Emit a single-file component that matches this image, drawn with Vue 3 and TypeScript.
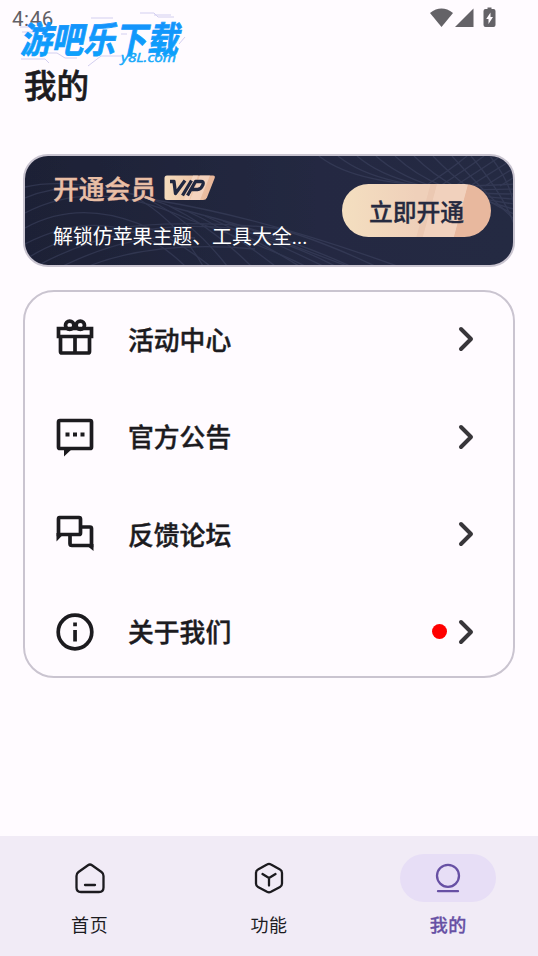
<script setup lang="ts">
interface MenuItem {
  id: string
  label: string
  dot?: boolean
}

interface TabItem {
  id: string
  label: string
}

const menu: MenuItem[] = [
  { id: 'gift', label: '活动中心' },
  { id: 'notice', label: '官方公告' },
  { id: 'forum', label: '反馈论坛' },
  { id: 'about', label: '关于我们', dot: true },
]

const tabs: TabItem[] = [
  { id: 'home', label: '首页' },
  { id: 'feature', label: '功能' },
  { id: 'mine', label: '我的' },
]

const activeTab = 'mine'

// Fans of thin curves behind the membership card
const leftArcs = [
  'M0 31Q45 20 130 44Q240 62 372 110',
  'M0 42Q60 16 150 52Q250 76 325 110',
  'M0 57Q70 20 165 64Q240 90 280 110',
  'M0 72Q80 28 185 110',
  'M0 88Q90 42 160 110',
  'M0 104Q70 55 250 72Q290 82 350 110',
  'M12 110Q100 62 205 72Q260 84 310 110',
  'M38 110Q110 75 170 82',
  'M64 110Q130 84 230 93',
]
const crossArcs = Array.from({ length: 7 }, (_, i) => `M${108 + i * 18} ${40 + i * 5}Q${150 + i * 18} ${62 + i * 4} ${178 + i * 24} 110`)
const rightArcs = Array.from({ length: 10 }, (_, i) => `M${294 + i * 19} 0Q${342 + i * 17} 38 489 ${28 + i * 5}`)
const rightCross = Array.from({ length: 7 }, (_, i) => `M${400 + i * 15} 30Q${425 + i * 15} 14 ${442 + i * 17} 0`)
const waves = [...leftArcs, ...crossArcs, ...rightArcs, ...rightCross]
</script>

<template>
  <div class="screen">
    <header class="status">
      <span class="clock">4:46</span>
      <svg class="signals" width="72" height="24" viewBox="0 0 72 24">
        <path d="M1 8Q12.500-.8 24 8L12.500 22Z" />
        <path d="M44.500 3.500V22H26Z" />
        <path d="M58.500 2.500h4V4h2q2 0 2 2v14q0 2-2 2h-8q-2 0-2-2V6q0-2 2-2h2Z" />
        <path class="bolt" d="M61.500 7.500 57.200 14H59.500v5l4.500-7H61.500Z" />
      </svg>
    </header>

    <svg class="brand" width="184" height="60" viewBox="0 0 184 60">
      <defs>
        <linearGradient id="brandBlue" x1="0" y1="0" x2="0" y2="1">
          <stop offset="0" stop-color="#1a8cfc" />
          <stop offset="1" stop-color="#08a6fb" />
        </linearGradient>
      </defs>
      <g class="circuit">
        <path d="M80 9h22M129 4h14l4 4h16M9 18h12M11 23h12M32 44h14l8 5h12M10 50h24l4 4M77 57l13-10h20M168 35l6-7M143 6h17M110 25h6" />
      </g>
      <text class="brand-name" transform="translate(9 43.500) skewX(-12) scale(1 .98)" textLength="158" lengthAdjust="spacingAndGlyphs">游吧乐下载</text>
      <text class="brand-site" x="110" y="52.500" textLength="55" lengthAdjust="spacingAndGlyphs">y8L.com</text>
    </svg>

    <h1 class="title">我的</h1>

    <main class="content">
      <section class="vip">
        <svg class="waves" width="488" height="110" viewBox="0 0 488 110">
          <path v-for="d in waves" :key="d" :d="d" />
        </svg>
        <div class="vip-info">
          <div class="vip-heading">
            <span class="vip-name">开通会员</span>
            <svg class="vip-badge" width="52" height="26" viewBox="0 0 52 26">
              <defs>
                <linearGradient id="badgeGold">
                  <stop offset="0" stop-color="#f5dcbd" />
                  <stop offset="1" stop-color="#e8b598" />
                </linearGradient>
              </defs>
              <path fill="url(#badgeGold)" d="M3 .5H49q2.500 0 1.700 2.500L43 22.500q-1 2.500-4 2.500H3Q.5 25 .5 22.500V3Q.5.5 3 .5Z" />
              <path fill="#f7dccb" opacity=".65" d="M29 .5h5L25 25h-5ZM36 .5h10L36 25H26Z" />
              <path fill="none" stroke="#202840" stroke-width="3.300" stroke-linejoin="round" d="M6 6.500H10L11.500 18.500 21 5.500M27.500 5.500 18.500 20.500M23.500 20.500 31.500 6.500H37q3 0 2 3l-.5 1q-1.500 4-5 4h-6" />
            </svg>
          </div>
          <p class="vip-desc">解锁仿苹果主题、工具大全<span class="dots">...</span></p>
        </div>
        <button class="vip-button" type="button">立即开通</button>
      </section>

      <nav class="menu">
        <a v-for="item in menu" :key="item.id" class="menu-row">
          <svg class="menu-icon" width="46" height="46" viewBox="0 0 46 46">
            <g v-if="item.id === 'gift'" class="line">
              <path d="M6.500 12.500h33v8h-33ZM8.500 20.500v15q0 1.500 1.500 1.500h26q1.500 0 1.500-1.500v-15M23 20.500v17" />
              <circle cx="17.700" cy="9.300" r="4.200" />
              <circle cx="28.300" cy="9.300" r="4.200" />
            </g>
            <g v-else-if="item.id === 'notice'">
              <path class="line" d="M8 6.500h30q1.500 0 1.500 1.500v25q0 1.500-1.500 1.500H8q-1.500 0-1.500-1.500V8q0-1.500 1.500-1.500Z" />
              <path d="M12 34h9l-9 8.500ZM13.500 18.500h4v4h-4ZM21 18.500h4v4h-4ZM28.500 18.500h4v4h-4Z" />
            </g>
            <g v-else-if="item.id === 'forum'">
              <path class="line" d="M7.500 6.500H27q1.500 0 1.500 1.500v14q0 1.500-1.500 1.500H6.500V8q0-1.500 1-1.500ZM28.500 16H38q1.500 0 1.500 1.500v17H20q-2 0-2-2v-9" />
              <path d="M4.500 22h8l-8 8.500ZM33 33h8.500v7Z" />
            </g>
            <g v-else>
              <circle class="line" cx="23" cy="23" r="16.800" />
              <path d="M21.200 13.500h3.700v3.800h-3.700ZM21.200 21h3.700v11.500h-3.700Z" />
            </g>
          </svg>
          <span class="menu-label">{{ item.label }}</span>
          <i v-if="item.dot" class="red-dot"></i>
          <svg class="chevron" width="16" height="26" viewBox="0 0 16 26">
            <path d="M3 3 13 13 3 23" />
          </svg>
        </a>
      </nav>
    </main>

    <footer class="tabs">
      <a v-for="tab in tabs" :key="tab.id" class="tab" :class="{ active: tab.id === activeTab }">
        <span class="pill">
          <svg width="36" height="36" viewBox="0 0 36 36">
            <path v-if="tab.id === 'home'" d="M16 5.200Q18 3.800 20 5.200L29.500 12Q31.500 13.500 31.500 16V27.500Q31.500 32 27 32H9Q4.500 32 4.500 27.500V16Q4.500 13.500 6.500 12ZM13 25h10" />
            <path v-else-if="tab.id === 'feature'" d="M16 4.500Q18 3.300 20 4.500L29 9.500Q31 10.500 31 13V23.500Q31 26 29 27L20 31.800Q18 32.800 16 31.800L7 27Q5 26 5 23.500V13Q5 10.500 7 9.500ZM11.500 14 18 18l6.500-4M18 18v7.500" />
            <g v-else>
              <circle cx="18" cy="15.800" r="11" />
              <path d="M8 31.200h20" />
            </g>
          </svg>
        </span>
        <span class="tab-label">{{ tab.label }}</span>
      </a>
    </footer>
  </div>
</template>

<style>
body {
  margin: 0;
  background: #fffbff;
}
</style>

<style scoped>
.screen {
  position: relative;
  display: flex;
  flex-direction: column;
  box-sizing: border-box;
  width: 538px;
  height: 956px;
  overflow: hidden;
  background: #fffbff;
  color: #1c1b1f;
  font-family: "Noto Sans CJK SC", sans-serif;
}

.status {
  display: flex;
  justify-content: space-between;
  height: 36px;
  padding: 5px 37px 0 12px;
  box-sizing: border-box;
}

.clock {
  color: #626065;
  font: 20.500px/28px Roboto, sans-serif;
  letter-spacing: .6px;
}

.signals {
  fill: #646267;
}

.signals .bolt {
  fill: #fffbff;
}

.brand {
  position: absolute;
  left: 11px;
  top: 9px;
  overflow: visible;
}

.brand-name {
  fill: url(#brandBlue);
  font-size: 37px;
  font-weight: 700;
  stroke: #129afc;
  stroke-width: .8px;
}

.brand-site {
  fill: #17a9fa;
  font: italic 500 12.500px "Open Sans", sans-serif;
  stroke: #17a9fa;
  stroke-width: .5px;
}

.circuit {
  fill: none;
  stroke: #d3cff0;
  stroke-width: 1px;
}

.title {
  height: 118px;
  margin: 0;
  padding: 25px 24px 0;
  box-sizing: border-box;
  font-size: 32.500px;
  font-weight: 500;
  line-height: 46px;
  -webkit-text-stroke: .6px currentColor;
}

.content {
  display: flex;
  flex: 1;
  flex-direction: column;
  gap: 23px;
  padding: 0 23px;
}

.vip {
  position: relative;
  display: flex;
  align-items: center;
  justify-content: space-between;
  box-sizing: border-box;
  height: 113px;
  padding: 0 22px 0 28px;
  overflow: hidden;
  border: 2px solid #c9c4d0;
  border-radius: 25px;
  background: linear-gradient(90deg, #1d2136, #242942 60%, #252a42);
}

.waves {
  position: absolute;
  left: 0;
  top: 0;
  fill: none;
  stroke: #424866;
  stroke-width: 1.300px;
  opacity: .5;
}

.vip-info {
  position: relative;
  display: flex;
  flex-direction: column;
  gap: 15px;
  padding-top: 2px;
  white-space: nowrap;
}

.vip-heading {
  display: flex;
  align-items: center;
  gap: 8px;
  height: 36px;
}

.vip-name {
  color: #e9bea5;
  font-size: 25.800px;
  font-weight: 500;
  line-height: 36px;
  -webkit-text-stroke: .4px currentColor;
}

.vip-desc {
  margin: 0;
  color: #fff;
  font-size: 19.900px;
  line-height: 30px;
}

.dots {
  font-family: Roboto, sans-serif;
}

.vip-button {
  position: relative;
  width: 149px;
  height: 53px;
  padding: 0;
  border: 0;
  border-radius: 27px;
  background:
    linear-gradient(105deg, transparent 54%, #ebc8b2 54.500%, #ebc8b2 58%, #f1d1bd 58.500%, #f1d1bd 77%, #e8b89e 77.500%),
    linear-gradient(90deg, #f4dfc0, #efd0ba 50%);
  color: #262a40;
  font-family: inherit;
  font-size: 23.800px;
  font-weight: 500;
  line-height: 53px;
  -webkit-text-stroke: .3px currentColor;
}

.menu {
  display: flex;
  flex-direction: column;
  gap: 6.600px;
  box-sizing: border-box;
  height: 388px;
  padding-top: 1.500px;
  border: 2px solid #cac4d0;
  border-radius: 31px;
}

.menu-row {
  display: flex;
  flex: 0 0 91px;
  align-items: center;
  padding: 0 39px 0 27px;
}

.menu-icon {
  margin-right: 30px;
  fill: #1c1b1f;
}

.line {
  fill: none;
  stroke: #1c1b1f;
  stroke-width: 3.700px;
}

.menu-label {
  flex: 1;
  margin-top: -1px;
  font-size: 25.800px;
  font-weight: 500;
  line-height: 38px;
  -webkit-text-stroke: .4px currentColor;
}

.red-dot {
  width: 15px;
  height: 15px;
  margin-right: 11px;
  border-radius: 50%;
  background: #f00;
}

.chevron {
  fill: none;
  stroke: #38363a;
  stroke-width: 4px;
  stroke-linecap: round;
  stroke-linejoin: round;
}

.tabs {
  display: flex;
  height: 120px;
  box-sizing: border-box;
  padding-top: 18px;
  background: #f1ebf6;
}

.tab {
  display: flex;
  flex: 1;
  flex-direction: column;
  align-items: center;
  gap: 9px;
}

.pill {
  display: flex;
  align-items: center;
  justify-content: center;
  width: 96px;
  height: 48px;
  border-radius: 24px;
}

.pill svg {
  fill: none;
  stroke: #1c1b1f;
  stroke-width: 2.300px;
  stroke-linecap: round;
  stroke-linejoin: round;
}

.tab-label {
  font-size: 18px;
  letter-spacing: .6px;
  line-height: 26px;
}

.active .pill {
  background: #e7def6;
}

.active .pill svg {
  stroke: #6750a4;
}

.active .tab-label {
  color: #6750a4;
  font-weight: 500;
  -webkit-text-stroke: .3px currentColor;
}
</style>
